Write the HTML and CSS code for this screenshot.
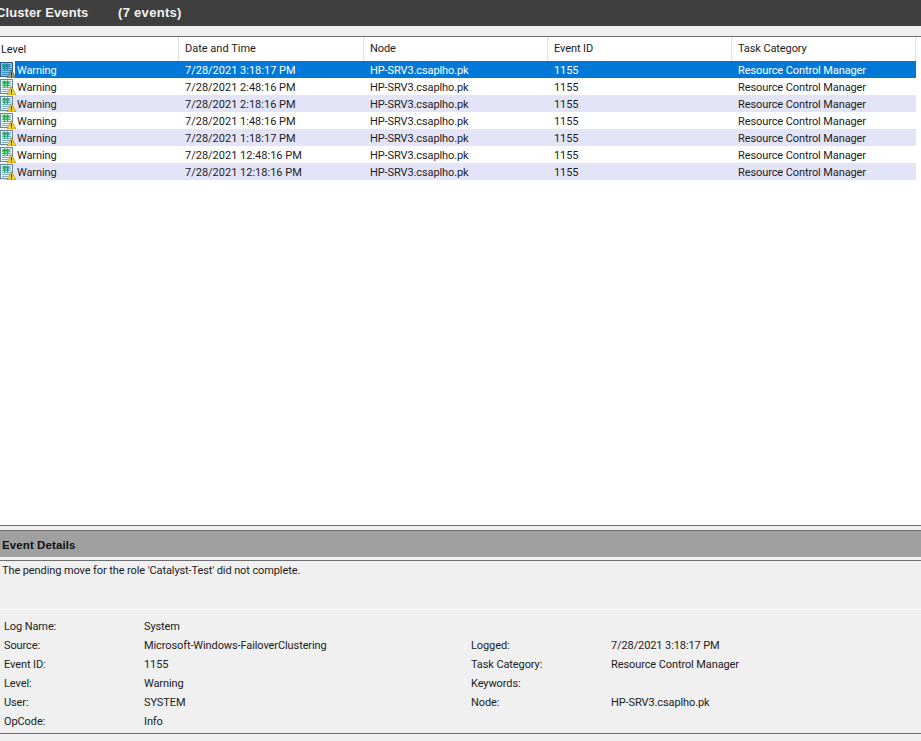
FILE: index.html
```html
<!DOCTYPE html>
<html lang="en">
<head>
<meta charset="utf-8">
<title>Cluster Events</title>
<link rel="stylesheet" href="styles.css">
</head>
<body>
<svg class="defs" width="0" height="0" aria-hidden="true">
  <defs>
    <symbol id="warn" viewBox="0 0 16 16">
      <rect x="0.5" y="0.5" width="12" height="14" fill="#eaf2f8" stroke="#6b8799"/>
      <path d="M2 2.5h9M2 4.5h9M2 6.5h9M2 8.5h9M2 10.5h8M2 12.5h6" stroke="#7fadcf"/>
      <path d="M4.5 1.5v7M7.5 1.5v7M2.5 3.5h7M2.5 6h7" stroke="#17b04a" stroke-width="1.2"/>
      <path d="M11.5 7.5 16 16H7z" fill="#f9d81e" stroke="#8a7a20" stroke-width="0.6"/>
      <path d="M11.5 10.5v3M11.5 14.2v1" stroke="#222"/>
    </symbol>
    <symbol id="warn-sel" viewBox="0 0 16 16">
      <rect x="0.5" y="0.5" width="12" height="14" fill="#8dbfe3" stroke="#2f5e80"/>
      <path d="M2 2.5h9M2 4.5h9M2 6.5h9M2 8.5h9M2 10.5h8M2 12.5h6" stroke="#3f8fc8"/>
      <path d="M4.5 1.5v7M7.5 1.5v7M2.5 3.5h7M2.5 6h7" stroke="#149a78" stroke-width="1.2"/>
      <path d="M11.5 7.5 16 16H7z" fill="#8ca08a" stroke="#44604c" stroke-width="0.6"/>
      <path d="M11.5 10.5v3M11.5 14.2v1" stroke="#1c2c28"/>
    </symbol>
  </defs>
</svg>
<div class="page">
  <header class="title-bar"><span class="title-name">Cluster Events</span><span class="title-count">(7 events)</span></header>
  <div class="title-gap"></div>
  <main class="list">
    <div class="row head">
      <div class="cell c1">Level</div>
      <div class="cell c2">Date and Time</div>
      <div class="cell c3">Node</div>
      <div class="cell c4">Event ID</div>
      <div class="cell c5">Task Category</div>
    </div>
    <div class="row selected">
      <div class="cell c1"><svg class="icon"><use href="#warn-sel"/></svg><span class="level">Warning</span></div>
      <div class="cell c2">7/28/2021 3:18:17 PM</div><div class="cell c3">HP-SRV3.csaplho.pk</div><div class="cell c4">1155</div><div class="cell c5">Resource Control Manager</div>
    </div>
    <div class="row">
      <div class="cell c1"><svg class="icon"><use href="#warn"/></svg><span class="level">Warning</span></div>
      <div class="cell c2">7/28/2021 2:48:16 PM</div><div class="cell c3">HP-SRV3.csaplho.pk</div><div class="cell c4">1155</div><div class="cell c5">Resource Control Manager</div>
    </div>
    <div class="row alt">
      <div class="cell c1"><svg class="icon"><use href="#warn"/></svg><span class="level">Warning</span></div>
      <div class="cell c2">7/28/2021 2:18:16 PM</div><div class="cell c3">HP-SRV3.csaplho.pk</div><div class="cell c4">1155</div><div class="cell c5">Resource Control Manager</div>
    </div>
    <div class="row">
      <div class="cell c1"><svg class="icon"><use href="#warn"/></svg><span class="level">Warning</span></div>
      <div class="cell c2">7/28/2021 1:48:16 PM</div><div class="cell c3">HP-SRV3.csaplho.pk</div><div class="cell c4">1155</div><div class="cell c5">Resource Control Manager</div>
    </div>
    <div class="row alt">
      <div class="cell c1"><svg class="icon"><use href="#warn"/></svg><span class="level">Warning</span></div>
      <div class="cell c2">7/28/2021 1:18:17 PM</div><div class="cell c3">HP-SRV3.csaplho.pk</div><div class="cell c4">1155</div><div class="cell c5">Resource Control Manager</div>
    </div>
    <div class="row">
      <div class="cell c1"><svg class="icon"><use href="#warn"/></svg><span class="level">Warning</span></div>
      <div class="cell c2">7/28/2021 12:48:16 PM</div><div class="cell c3">HP-SRV3.csaplho.pk</div><div class="cell c4">1155</div><div class="cell c5">Resource Control Manager</div>
    </div>
    <div class="row alt">
      <div class="cell c1"><svg class="icon"><use href="#warn"/></svg><span class="level">Warning</span></div>
      <div class="cell c2">7/28/2021 12:18:16 PM</div><div class="cell c3">HP-SRV3.csaplho.pk</div><div class="cell c4">1155</div><div class="cell c5">Resource Control Manager</div>
    </div>
  </main>
  <section class="details-head">Event Details</section>
  <section class="message">The pending move for the role 'Catalyst-Test' did not complete.</section>
  <section class="props">
    <div class="k">Log Name:</div><div class="v">System</div><div></div><div></div>
    <div class="k">Source:</div><div class="v">Microsoft-Windows-FailoverClustering</div><div class="k">Logged:</div><div class="v">7/28/2021 3:18:17 PM</div>
    <div class="k">Event ID:</div><div class="v">1155</div><div class="k">Task Category:</div><div class="v">Resource Control Manager</div>
    <div class="k">Level:</div><div class="v">Warning</div><div class="k">Keywords:</div><div class="v"></div>
    <div class="k">User:</div><div class="v">SYSTEM</div><div class="k">Node:</div><div class="v">HP-SRV3.csaplho.pk</div>
    <div class="k">OpCode:</div><div class="v">Info</div><div></div><div></div>
  </section>
  <div class="end"></div>
</div>
</body>
</html>
```
FILE: styles.css
```css
html, body {
  margin: 0;
  padding: 0;
  background: #f0f0f0;
}
.defs { position: absolute; }
.page {
  width: 921px;
  height: 741px;
  overflow: hidden;
  display: flex;
  flex-direction: column;
  font-family: Roboto, "Liberation Sans", Arial, sans-serif;
  font-size: 11px;
  letter-spacing: -0.1px;
  color: #1c1c1c;
}
.title-bar {
  height: 26px;
  flex: none;
  background: #3f3f3f;
  color: #f2f2f2;
  font-family: "Liberation Sans", Arial, sans-serif;
  font-size: 13px;
  font-weight: 700;
  line-height: 25px;
  display: flex;
  margin-left: -4px;
  letter-spacing: 0.3px;
}
.title-name { width: 122px; letter-spacing: 0.1px; }
.title-gap {
  height: 10px;
  flex: none;
  background: #f0f0f0;
  border-bottom: 1px solid #6d6d6d;
}
.list {
  flex: none;
  height: 488px;
  background: #fff;
  border-bottom: 1px solid #6d6d6d;
}
.row {
  display: grid;
  grid-template-columns: 179px 185px 184px 184px 184px;
  width: 916px;
  height: 17px;
  line-height: 19px;
  white-space: nowrap;
}
.head {
  height: 24px;
  line-height: 23px;
  width: 921px;
  grid-template-columns: 179px 185px 184px 184px 184px 5px;
}
.head .cell { border-right: 1px solid #e3e3e3; }
.head .c1 { padding-left: 1px; }
.head .c5 { padding-left: 6px; }
.cell { padding-left: 6px; overflow: hidden; box-sizing: border-box; }
.c2 { letter-spacing: 0; }
.c1 { padding-left: 0; display: flex; align-items: center; }
.icon { width: 16px; height: 16px; flex: none; }
.level { padding: 2px 0 0 1px; flex: none; width: 45px; line-height: 17px; }
.selected { background: linear-gradient(#0078d7, #0078d7) no-repeat 15px 0 / 901px 100%; color: #fff; }
.alt { background: #e4e4f8; }
.details-head {
  flex: none;
  margin-top: 4px;
  height: 27px;
  box-sizing: border-box;
  background: #a0a0a0;
  border-top: 1px solid #6d6d6d;
  color: #111;
  font-family: "Liberation Sans", Arial, sans-serif;
  font-size: 11.5px;
  font-weight: 700;
  line-height: 28px;
  padding-left: 2px;
  letter-spacing: 0.1px;
}
.message {
  flex: none;
  margin-top: 3px;
  height: 50px;
  box-sizing: border-box;
  border-top: 1px solid #6d6d6d;
  border-bottom: 1px solid #fafafa;
  padding: 2px 0 0 2px;
  line-height: 16px;
}
.props {
  flex: none;
  display: grid;
  grid-template-columns: 140px 327px 140px 310px;
  grid-auto-rows: 19px;
  padding: 7px 0 0 4px;
  line-height: 19px;
  height: 123px;
  box-sizing: border-box;
  white-space: nowrap;
}
.end {
  flex: none;
  border-top: 1px solid #6d6d6d;
  height: 6px;
}
```
